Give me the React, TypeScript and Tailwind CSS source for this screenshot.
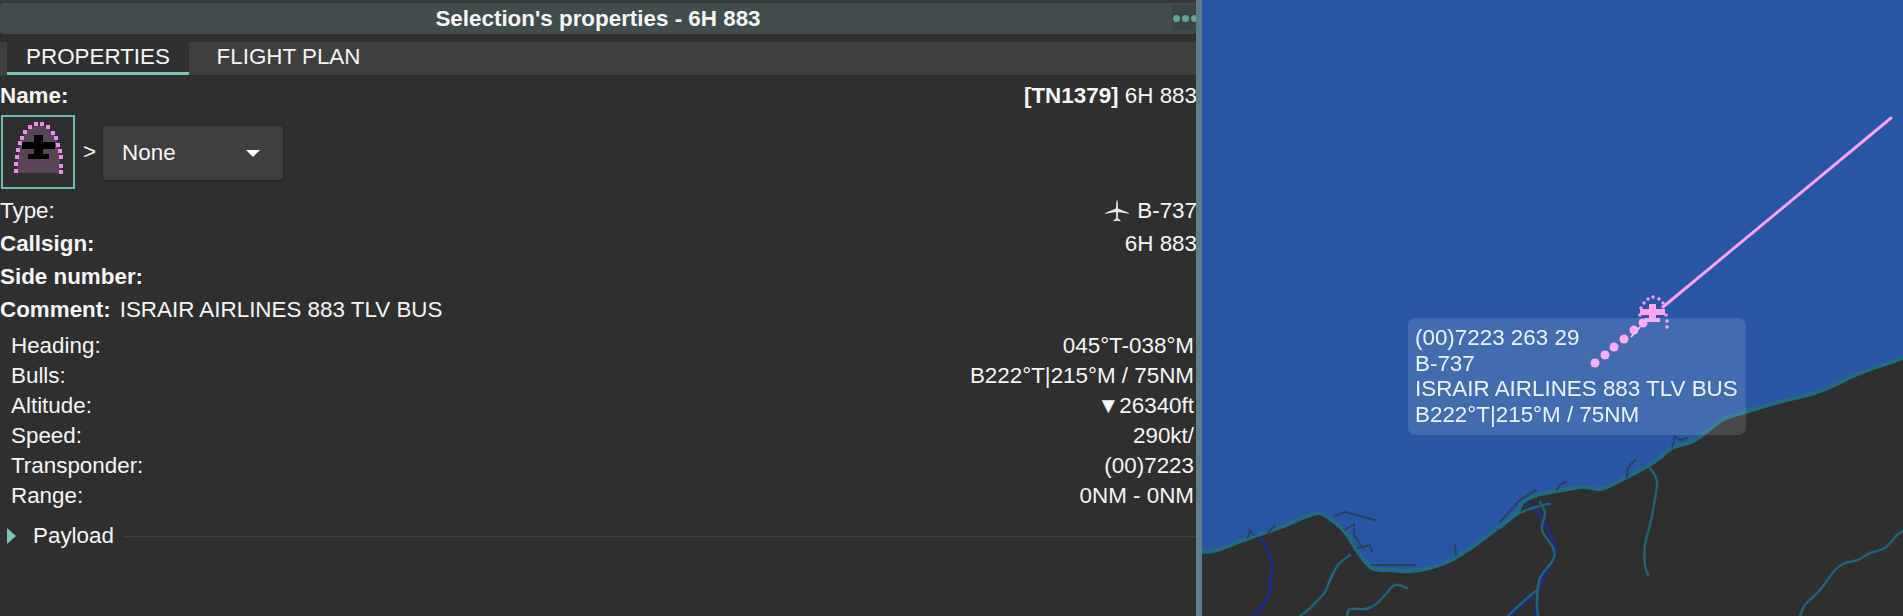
import React from 'react'

const font = { fontFamily: '"Liberation Sans", Arial, sans-serif' }

const details = [
  ['Heading:', '045°T-038°M'],
  ['Bulls:', 'B222°T|215°M / 75NM'],
  ['Altitude:', '▼26340ft'],
  ['Speed:', '290kt/'],
  ['Transponder:', '(00)7223'],
  ['Range:', '0NM - 0NM'],
]

const domeDots = [
  [15, 171], [15, 164], [16, 157], [17, 150], [19, 143], [21, 138], [24, 132], [29, 127], [35, 124], [41, 124],
  [47, 127], [52, 133], [55, 138], [57, 145], [59, 151], [60, 157], [60, 166], [60, 172],
]

type Pt = number[]

// catmull-rom through the points, so the coast doesn't look like a polygon
function smooth(pts: Pt[]) {
  let d = `M${pts[0][0]} ${pts[0][1]}`
  for (let i = 0; i < pts.length - 1; i++) {
    const p0 = pts[Math.max(i - 1, 0)]
    const p1 = pts[i]
    const p2 = pts[i + 1]
    const p3 = pts[Math.min(i + 2, pts.length - 1)]
    const c1x = p1[0] + (p2[0] - p0[0]) / 6
    const c1y = p1[1] + (p2[1] - p0[1]) / 6
    const c2x = p2[0] - (p3[0] - p1[0]) / 6
    const c2y = p2[1] - (p3[1] - p1[1]) / 6
    d += ` C${c1x} ${c1y} ${c2x} ${c2y} ${p2[0]} ${p2[1]}`
  }
  return d
}

const coast: Pt[] = [
  [1202, 552], [1217, 550], [1249, 538], [1281, 527], [1313, 514], [1326, 516], [1345, 532], [1358, 552], [1372, 568],
  [1390, 570], [1413, 571], [1445, 563], [1472, 547], [1500, 526], [1517, 512], [1523, 502], [1537, 495], [1557, 491], [1583, 487], [1600, 489],
  [1617, 482], [1654, 462], [1672, 448], [1695, 440], [1722, 420], [1745, 412], [1775, 403], [1820, 391], [1860, 373], [1903, 358],
]

const rivers: Pt[][] = [
  [[1350, 555], [1338, 565], [1330, 580], [1325, 592], [1316, 602], [1308, 610], [1300, 616]],
  [[1407, 588], [1395, 585], [1385, 595], [1375, 605], [1365, 609], [1350, 609], [1347, 616]],
  [[1650, 468], [1657, 482], [1653, 510], [1650, 525], [1645, 545], [1645, 565], [1648, 575]],
  [[1540, 502], [1545, 513], [1542, 530], [1553, 548], [1553, 560], [1540, 578], [1537, 600], [1538, 616]],
  [[1537, 590], [1525, 600], [1512, 612], [1508, 616]],
  [[1500, 528], [1520, 513], [1543, 505], [1550, 504]],
  [[1800, 616], [1805, 605], [1820, 590], [1835, 570], [1845, 563], [1858, 560], [1870, 553], [1885, 548], [1897, 535], [1903, 531]],
]

const deepRivers: Pt[][] = [
  [[1260, 537], [1270, 555], [1272, 565], [1270, 580], [1270, 592], [1262, 606], [1255, 616]],
  [[1528, 503], [1542, 518], [1555, 547], [1553, 560], [1545, 575], [1538, 590], [1536, 616]],
  [[1538, 590], [1525, 602], [1510, 616]],
]

function SymbolIcon() {
  return (
    <svg width="74" height="74" viewBox="0 115 74 74" shapeRendering="crispEdges">
      <path d="M16 173 L17 150 Q20 135 30 128 Q38 123 46 128 Q56 135 58 150 L60 173 Z" fill="#5a4458" />
      <path d="M33 135 H42 V142 H54 V149 H42 V154 H48 V159 H27 V154 H33 V149 H21 V142 H33 Z" fill="#000" />
      {domeDots.map(([x, y], i) => (
        <rect key={i} x={x - 2} y={y - 2} width="4" height="4" fill="#f08cf0" />
      ))}
    </svg>
  )
}

function AirlinerIcon() {
  return (
    <svg width="26" height="26" viewBox="0 0 26 26" className="mr-[7px] blur-[0.3px]">
      <path
        d="M13 1 L13.8 5 L14 10.5 L25 15 L25 15.8 L14 14 L13.8 20 L16.5 22.6 L16.5 23.4 L13 22.8 L9.5 23.4 L9.5 22.6 L12.2 20 L12 14 L1 15.8 L1 15 L12 10.5 L12.2 5 Z"
        fill="#e6e6e6"
      />
    </svg>
  )
}

function MapCanvas() {
  const coastPath = smooth(coast)
  const dots = [
    [1595, 363], [1605, 355], [1614, 347], [1624, 339], [1634, 330], [1643, 323],
  ]
  const ring = [
    [1640, 315], [1641, 308], [1644, 303], [1648, 299], [1653, 297], [1659, 299], [1663, 303], [1666, 315], [1667, 321], [1667, 327],
  ]
  return (
    <svg width="701" height="616" viewBox="1202 0 701 616" className="absolute inset-0 blur-[0.5px]">
      <rect x="1202" y="0" width="701" height="616" fill="#2856a5" />
      <path d={`${coastPath} L1903 616 L1202 616 Z`} fill="#2f2f2f" />
      <g fill="none" strokeLinejoin="round" strokeLinecap="round">
        {deepRivers.map((r, i) => (
          <path key={i} d={smooth(r)} stroke="#1b2c8c" strokeWidth="3" />
        ))}
        {rivers.map((r, i) => (
          <path key={i} d={smooth(r)} stroke="#1f6478" strokeWidth="2.5" />
        ))}
        <path d={coastPath} stroke="#206b82" strokeWidth="4" />
        <path d="M1335 516 L1345 512 L1375 520 M1345 530 L1354 524 L1354 535 L1363 548 M1358 548 L1370 545 L1372 552 M1372 565 L1400 565 L1416 565" stroke="#24435f" strokeWidth="2" />
        <path d="M1248 538 L1250 530 L1254 535 M1268 532 L1275 526 M1456 555 L1455 545 M1500 522 L1520 500 L1536 490 M1557 490 L1560 484 L1566 482 M1627 477 L1628 468 L1635 460 M1672 448 L1675 436 L1680 440 L1687 438" stroke="#24435f" strokeWidth="2" />
      </g>
      <path d="M1663 307 L1891 118" stroke="#ffa0f0" strokeWidth="3" fill="none" strokeLinecap="round" />
      <path d="M1631 337 L1640 327" stroke="#f4e4f4" strokeWidth="1.5" />
      {dots.map(([x, y]) => (
        <circle key={x} cx={x} cy={y} r="4.5" fill="#ffa0f0" />
      ))}
      {ring.map(([x, y]) => (
        <circle key={x * 1000 + y} cx={x} cy={y} r="1.8" fill="#f49aec" />
      ))}
      <path d="M1649 304 H1656 V309 H1665 V315 H1656 V318 H1660 V322 H1645 V318 H1649 V315 H1640 V309 H1649 Z" fill="#ffa0f0" />
    </svg>
  )
}

export default function App() {
  return (
    <div className="flex h-[616px] w-[1903px] overflow-hidden bg-[#2f2f2f] text-[22.4px] text-[#f5f5f5]" style={font}>
      {/* Properties panel */}
      <div className="flex w-[1196px] shrink-0 flex-col">
        <div className="h-[3px] bg-[#343837]" />
        <div className="relative flex h-[31px] items-center justify-center rounded-[3px] bg-[#404d4c]">
          <span className="font-bold">Selection's properties - 6H 883</span>
          <div className="absolute right-0 top-[2px] flex h-[26px] w-[24px] items-center gap-[2px] overflow-hidden rounded-[3px] bg-[#3a4645] pl-[1px]">
            <span className="h-[7px] w-[7px] shrink-0 rounded-full bg-[#64a195]" />
            <span className="h-[7px] w-[7px] shrink-0 rounded-full bg-[#64a195]" />
            <span className="h-[7px] w-[7px] shrink-0 rounded-full bg-[#64a195]" />
          </div>
        </div>

        <div className="mt-[8px] flex h-[33px] bg-[#3f3f3f] pl-[7px]">
          <div className="flex w-[182px] items-center justify-center border-b-[3px] border-[#79c4bb] bg-[#303030]">PROPERTIES</div>
          <div className="flex w-[199px] items-center justify-center pb-[3px]">FLIGHT PLAN</div>
        </div>

        <div className="flex h-[40px] items-center justify-between pt-[1px]">
          <span className="font-bold">Name:</span>
          <span className="-mr-[1px]">
            <b>[TN1379]</b> 6H 883
          </span>
        </div>

        <div className="flex h-[74px] items-center">
          <div className="ml-[1px] h-[74px] w-[74px] border-2 border-[#6fbab0] [&>svg]:-m-[2px]">
            <SymbolIcon />
          </div>
          <span className="ml-[8px]">&gt;</span>
          <div className="ml-[7px] mt-[2px] flex h-[54px] w-[180px] items-center justify-between rounded-[4px] bg-[#3f3f3f] pl-[19px] pr-[23px] shadow-[0_1px_3px_rgba(0,0,0,0.4)]">
            <span>None</span>
            <span className="h-0 w-0 border-x-[7px] border-t-[7px] border-x-transparent border-t-white" />
          </div>
        </div>

        <div className="mt-[5px] flex h-[33px] items-center justify-between">
          <span>Type:</span>
          <span className="-mr-[1px] flex items-center">
            <AirlinerIcon />
            B-737
          </span>
        </div>
        <div className="flex h-[33px] items-center justify-between">
          <span className="font-bold">Callsign:</span>
          <span className="-mr-[1px]">6H 883</span>
        </div>
        <div className="flex h-[33px] items-center">
          <span className="font-bold">Side number:</span>
        </div>
        <div className="flex h-[33px] items-center">
          <span className="mr-[9px] font-bold">Comment:</span>
          <span>ISRAIR AIRLINES 883 TLV BUS</span>
        </div>

        <div className="mt-[5px] flex flex-col pl-[11px] pr-[2px]">
          {details.map(([label, value]) => (
            <div key={label} className="flex h-[30px] items-center justify-between">
              <span>{label}</span>
              <span>{value}</span>
            </div>
          ))}
        </div>

        <div className="mt-[10px] flex h-[30px] items-center pl-[7px]">
          <span className="h-0 w-0 border-y-[8px] border-l-[9px] border-y-transparent border-l-[#79c4bb]" />
          <span className="ml-[17px]">Payload</span>
          <span className="ml-[9px] h-[1px] flex-1 bg-[#3f3f3f]" />
        </div>
      </div>

      <div className="w-[6px] shrink-0 bg-[#5d7c8c]" />

      {/* Map */}
      <div className="relative flex-1">
        <MapCanvas />
        <div className="absolute left-[206px] top-[318px] h-[117px] w-[338px] rounded-[7px] bg-white/[0.13] px-[7px] py-[7px] leading-[25.5px] text-[#eef2fa] blur-[0.3px]">
          <div>(00)7223 263 29</div>
          <div>B-737</div>
          <div>ISRAIR AIRLINES 883 TLV BUS</div>
          <div>B222°T|215°M / 75NM</div>
        </div>
      </div>
    </div>
  )
}
